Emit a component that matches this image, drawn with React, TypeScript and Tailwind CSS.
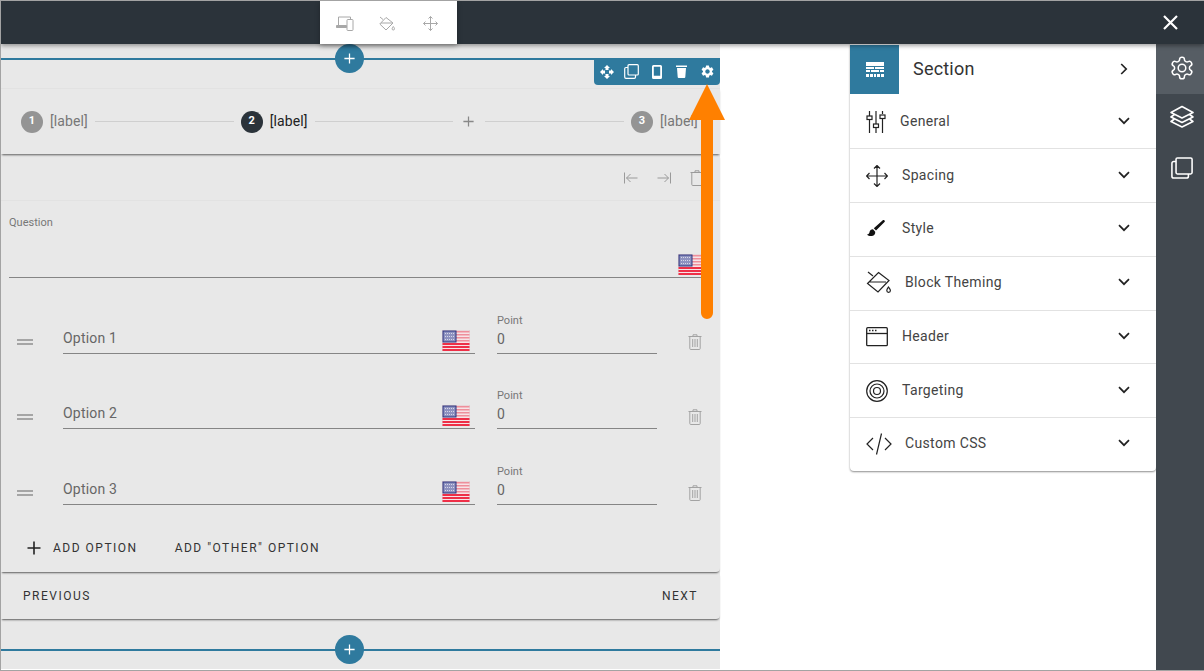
import React from "react";
import { MdSettings } from "react-icons/md";

const Flag = ({ className = "" }: { className?: string }) => (
  <svg width="28" height="21" viewBox="0 0 28 21" className={className}>
    <rect width="28" height="21" fill="#d9c9cc" />
    <rect x="0.5" y="0.5" width="27" height="20" fill="#f7e3e6" />
    {[1, 4, 7, 10].map((y) => (
      <rect key={y} x="14" y={y} width="13.5" height="1.5" fill="#ee8f9b" />
    ))}
    {[13, 16, 19].map((y) => (
      <rect key={y} x="0.5" y={y} width="27" height="2" fill="#ee2f47" />
    ))}
    <rect x="0.5" y="0.5" width="14" height="12" fill="#28327f" />
    <rect x="1.5" y="1.5" width="12" height="10" fill="#8e92c0" />
    {[2, 4, 6, 8, 10].map((x) =>
      [3, 6, 9].map((y) => <rect key={`${x}-${y}`} x={x + 1} y={y} width="1" height="1" fill="#d6d7e8" />)
    )}
  </svg>
);

const Plus = ({ size = 14, cls = "" }: { size?: number; cls?: string }) => (
  <svg width={size} height={size} viewBox="0 0 14 14" className={cls}>
    <path d="M7 0.5v13M0.5 7h13" stroke="currentColor" strokeWidth="1.6" fill="none" />
  </svg>
);

const Trash = () => (
  <svg width="14" height="16" viewBox="0 0 14 16" fill="none" stroke="#a3a3a3" strokeWidth="1">
    <path d="M0.5 2.5h13M5 2.5V0.8h4v1.7M1.8 2.5v12a1 1 0 0 0 1 1h8.4a1 1 0 0 0 1-1v-12M4.7 5v8M7 5v8M9.3 5v8" />
  </svg>
);

const Chevron = () => (
  <svg width="12" height="8" viewBox="0 0 12 8" fill="none" stroke="#222" strokeWidth="1.7">
    <path d="M1 1.2l5 5 5-5" />
  </svg>
);

const Round = ({ children, cls }: { children: React.ReactNode; cls: string }) => (
  <div className={`w-[22px] h-[22px] shrink-0 rounded-full flex items-center justify-center text-white text-[11px] font-bold ${cls}`}>
    {children}
  </div>
);

const StepLine = () => <div className="flex-1 h-px bg-[#cfcfcf] mx-[7px]" />;

const StepLabel = ({ text, cls }: { text: string; cls: string }) => (
  <span className={`ml-[7px] w-[38px] shrink-0 text-[14px] tracking-[0.1px] whitespace-nowrap ${cls}`}>{text}</span>
);

const OptionRow = ({ label, h }: { label: string; h: string }) => (
  <div className={`flex items-end pl-[16px] ${h}`}>
    <div className="w-[16px] h-[6px] mb-[9px] border-y-2 border-[#a5a5a5]" />
    <div className="ml-[30px] w-[412px] h-[30px] border-b border-[#858585] flex items-center justify-between">
      <span className="text-[14px] text-[#666] tracking-[0.2px]">{label}</span>
      <Flag className="self-end mb-[2px] mr-[5px]" />
    </div>
    <div className="ml-[22px] w-[160px] border-b border-[#858585]">
      <div className="text-[11px] leading-[12px] text-[#777]">Point</div>
      <div className="text-[14px] h-[26px] leading-[25px] text-[#666]">0</div>
    </div>
    <div className="ml-[31px] mb-[4px]">
      <Trash />
    </div>
  </div>
);

const stroke = { fill: "none", stroke: "#222", strokeWidth: 1.2 };

const SideIcons: Record<string, React.ReactNode> = {
  General: (
    <svg width="20" height="24" viewBox="0 0 20 24" {...stroke}>
      <path d="M3.5 1v5M3.5 10v13M10 1v13M10 18v5M16.500 1v3M16.500 9v14" />
      <rect x="1" y="6" width="5" height="3.500" />
      <rect x="7.500" y="14" width="5" height="3.500" />
      <rect x="14" y="5" width="5" height="3.500" />
    </svg>
  ),
  Spacing: (
    <svg width="22" height="22" viewBox="0 0 22 22" {...stroke}>
      <path d="M11 0.500v21M0.500 11h21M8 3.500l3-3 3 3M8 18.500l3 3 3-3M3.500 8l-3 3 3 3M18.500 8l3 3-3 3" />
    </svg>
  ),
  Style: (
    <svg width="20" height="20" viewBox="0 0 20 20" fill="#111">
      <path d="M18.500 1.500c.6.600.4 1.200 0 1.600L10 11.500 7.800 9.300 16.800 1.300c.5-.4 1.200-.3 1.700.2z" />
      <path d="M7 10.200c-2 0-3.200 1.200-3.500 3-.2 1.300-1 2-2.500 2.300 1.200 1.400 3 1.800 5 1.500 2.400-.4 3.500-2 3.200-4.300z" />
    </svg>
  ),
  "Block Theming": (
    <svg width="26" height="24" viewBox="0 0 26 24" {...stroke}>
      <path d="M2 1l5 4M12.500 1.500L23 9.500 12 21 1.500 12.500zM3 11h17" />
      <path d="M22.500 16c-1 1.500-1.700 2.500-1.700 3.500a1.800 1.800 0 0 0 3.600 0c0-1-.9-2-1.900-3.500z" />
    </svg>
  ),
  Header: (
    <svg width="22" height="20" viewBox="0 0 22 20" fill="none" stroke="#222" strokeWidth="1.300">
      <rect x="0.700" y="0.700" width="20.600" height="18" rx="1" />
      <path d="M0.700 6.500h20.600" />
      <path d="M3 3.600h1.500M6 3.600h1.500M9 3.600h1.500" strokeWidth="1.500" />
    </svg>
  ),
  Targeting: (
    <svg width="22" height="22" viewBox="0 0 22 22" {...stroke}>
      <circle cx="11" cy="11" r="10.300" />
      <circle cx="11" cy="11" r="7" />
      <circle cx="11" cy="11" r="3.500" />
    </svg>
  ),
  "Custom CSS": (
    <svg width="26" height="22" viewBox="0 0 26 22" {...stroke}>
      <path d="M7 5l-6 6 6 6M19 5l6 6-6 6M15.500 0.500l-5 21" />
    </svg>
  ),
};

const rows = [
  { name: "General", w: "w-[34px]", h: "h-[54px]" },
  { name: "Spacing", w: "w-[36px]", h: "h-[54px]" },
  { name: "Style", w: "w-[36px]", h: "h-[54px] pb-[2px]" },
  { name: "Block Theming", w: "w-[39px]", h: "h-[54px] pb-[2px]" },
  { name: "Header", w: "w-[36px]", h: "h-[53px] pb-[1px]" },
  { name: "Targeting", w: "w-[36px]", h: "h-[54px]" },
  { name: "Custom CSS", w: "w-[39px]", h: "h-[53px] pb-[2px]" },
];

const cardShadow = "shadow-[0_2px_2px_-1px_rgba(0,0,0,0.6)]";

export default function App() {
  return (
    <div className="relative w-[1204px] h-[671px] overflow-hidden flex flex-col bg-white border-t border-l border-b border-[#a3a3a3] font-['Roboto',sans-serif]">
      {/* top bar */}
      <div className="relative z-20 h-[43px] shrink-0 bg-[#2b333a] flex items-stretch shadow-[0_2px_4px_rgba(0,0,0,0.35)]">
        <div className="ml-[319px] w-[137px] bg-white flex items-center pt-[2px] shadow-[0_2px_5px_rgba(0,0,0,0.3)] text-[#a8a8a8]">
          <svg width="18" height="15" viewBox="0 0 18 15" fill="none" stroke="currentColor" strokeWidth="1" className="ml-[16px]">
            <path d="M2.500 9V1h12v2M0.500 11h10" strokeWidth="1" />
            <rect x="11" y="3.500" width="6" height="11" rx="0.800" />
            <path d="M0.500 9.500h10v2h-10z" fill="currentColor" />
          </svg>
          <svg width="16" height="15" viewBox="0 0 16 15" fill="none" stroke="currentColor" strokeWidth="1" className="ml-[25px]">
            <path d="M1 1l3 2.500M7 1.500L14 7 7 14 0.800 8zM2 7h11" />
            <path d="M14.300 10.500c-.7 1-1.200 1.700-1.200 2.300a1.200 1.200 0 0 0 2.400 0c0-.6-.5-1.300-1.200-2.300z" />
          </svg>
          <svg width="15" height="15" viewBox="0 0 15 15" fill="none" stroke="currentColor" strokeWidth="1" className="ml-[28px]">
            <path d="M7.500 0.500v14M0.500 7.500h14M5.500 2.500l2-2 2 2M5.500 12.500l2 2 2-2M2.500 5.500l-2 2 2 2M12.500 5.500l2 2-2 2" />
          </svg>
        </div>
        <div className="ml-auto mr-[26px] flex items-center text-white">
          <svg width="15" height="15" viewBox="0 0 15 15" fill="none" stroke="currentColor" strokeWidth="2.200">
            <path d="M1 1l13 13M14 1L1 14" />
          </svg>
        </div>
      </div>

      <div className="flex-1 flex items-stretch min-h-0">
        {/* canvas */}
        <div className="relative w-[719px] shrink-0 h-[625px] bg-[#e8e8e8] pt-[44px]">
          <div className="absolute left-0 right-0 top-[14px] h-[2px] bg-[#2f7a9e]" />
          <div className="absolute left-[334px] top-0 w-[29px] h-[29px] rounded-full bg-[#2f7a9e] text-white flex items-center justify-center">
            <Plus size={11} />
          </div>
          <div className="absolute right-0 top-[14px] w-[126px] h-[27px] bg-[#2f7a9e] rounded-b-[4px] text-white flex items-center pl-[6px] gap-[11px] z-10">
            <svg width="14" height="14" viewBox="0 0 14 14" fill="white">
              <path d="M7 0l3 3H8.500v2h-3V3H4zM7 14l-3-3h1.500V9h3v2H10zM0 7l3-3v1.500h2v3H3V10zM14 7l-3 3V8.500H9v-3h2V4z" />
            </svg>
            <svg width="15" height="15" viewBox="0 0 15 15" fill="none" stroke="white" strokeWidth="1.200" className="-ml-[1px]">
              <rect x="4" y="0.700" width="10.300" height="10.300" rx="1" />
              <path d="M4 3.500H2a1.300 1.300 0 0 0-1.300 1.300v8.200c0 .8.500 1.300 1.300 1.300h8.200c.8 0 1.300-.5 1.300-1.300V11" />
            </svg>
            <svg width="10" height="14" viewBox="0 0 10 14" className="ml-[2px]">
              <path fillRule="evenodd" fill="white" d="M1.500 0h7A1.500 1.500 0 0 1 10 1.500v11A1.500 1.500 0 0 1 8.500 14h-7A1.500 1.500 0 0 1 0 12.500v-11A1.500 1.500 0 0 1 1.500 0zM1.800 1.800v9h6.400v-9z" />
            </svg>
            <svg width="11" height="13" viewBox="0 0 11 13" fill="white" className="ml-[3px]">
              <path d="M0 0.500h11v1.500H0zM1 3h9l-0.700 9a1 1 0 0 1-1 1H2.700a1 1 0 0 1-1-1z" />
            </svg>
            <MdSettings size={15} className="ml-[2px]" />
          </div>

          {/* stepper */}
          <div className={`h-[66px] border-t border-[#e2e2e2] ${cardShadow} flex items-center pl-[20px] pr-[22px]`}>
            <Round cls="bg-[#949494]">1</Round>
            <StepLabel text="[label]" cls="text-[#777]" />
            <StepLine />
            <Round cls="bg-[#2b333a]">2</Round>
            <StepLabel text="[label]" cls="text-[#222]" />
            <StepLine />
            <Plus size={11} cls="text-[#888] ml-[3px] mr-[4px] shrink-0" />
            <StepLine />
            <Round cls="bg-[#949494]">3</Round>
            <StepLabel text="[label]" cls="text-[#777]" />
          </div>

          {/* question card */}
          <div className={`mt-[1px] rounded-br-[4px] ${cardShadow}`}>
            <div className="h-[46px] border-b border-[#e2e2e2] flex items-center justify-end pr-[16px] gap-[19px] text-[#9a9a9a]">
              <svg width="14" height="12" viewBox="0 0 14 12" fill="none" stroke="currentColor" strokeWidth="1">
                <path d="M0.500 0.500v11M13.500 6H2.500M6.500 2l-4 4 4 4" />
              </svg>
              <svg width="14" height="12" viewBox="0 0 14 12" fill="none" stroke="currentColor" strokeWidth="1">
                <path d="M13.500 0.500v11M0.500 6h11M7.500 2l4 4-4 4" />
              </svg>
              <svg width="14" height="16" viewBox="0 0 14 16" fill="none" stroke="currentColor" strokeWidth="1">
                <path d="M0.500 2.500h13M5 2.500V0.800h4v1.700M1.800 2.500v12a1 1 0 0 0 1 1h8.400a1 1 0 0 0 1-1v-12" />
              </svg>
            </div>
            <div className="h-[77px] ml-[8px] mr-[14px] border-b border-[#858585] flex flex-col">
              <div className="pt-[16px] text-[11px] leading-[12px] text-[#777]">Question</div>
              <Flag className="mt-auto mb-[2px] self-end" />
            </div>
            <OptionRow label="Option 1" h="h-[76px]" />
            <OptionRow label="Option 2" h="h-[75px]" />
            <OptionRow label="Option 3" h="h-[76px]" />
            <div className="h-[67px] pt-[31px] pl-[26px] flex items-start">
              <div className="h-[24px] flex items-center text-[#333] text-[12px] tracking-[1.5px]">
                <Plus size={14} cls="text-[#222]" />
                <span className="ml-[12px]">ADD OPTION</span>
                <span className="ml-[37px]">ADD "OTHER" OPTION</span>
              </div>
            </div>
          </div>

          {/* nav */}
          <div className={`mt-[1px] h-[46px] rounded-br-[4px] ${cardShadow} flex items-center justify-between pl-[22px] pr-[22px] text-[#333] text-[12px] tracking-[1.5px]`}>
            <span>PREVIOUS</span>
            <span>NEXT</span>
          </div>

          <div className="absolute left-0 right-0 top-[605px] h-[2px] bg-[#2f7a9e]" />
          <div className="absolute left-[334px] top-[591px] w-[29px] h-[29px] rounded-full bg-[#2f7a9e] text-white flex items-center justify-center">
            <Plus size={11} />
          </div>
        </div>

        {/* properties */}
        <div className="flex-1 pl-[130px]">
          <div className="w-[306px] rounded-b-[4px] shadow-[0_1px_2px_rgba(0,0,0,0.45)]">
            <div className="h-[51px] flex items-start">
              <div className="w-[49px] h-[49px] mt-[1px] bg-[#2f7a9e] flex items-center justify-center">
                <svg width="18" height="16" viewBox="0 0 18 16" fill="white">
                  <rect x="0" y="0" width="18" height="4" />
                  <rect x="0" y="5" width="8" height="2" />
                  <rect x="9" y="5" width="9" height="2" />
                  <rect x="0" y="8" width="4" height="2" />
                  <rect x="5" y="8" width="8" height="2" />
                  <rect x="14" y="8" width="4" height="2" />
                  <rect x="0" y="12" width="3" height="3" />
                  <rect x="4" y="12" width="3" height="3" />
                  <rect x="8" y="12" width="2" height="3" />
                  <rect x="11" y="12" width="3" height="3" />
                  <rect x="15" y="12" width="3" height="3" />
                </svg>
              </div>
              <span className="ml-[14px] mt-[12px] leading-[26px] text-[18px] text-[#333] tracking-[0.2px]">Section</span>
              <svg width="8" height="12" viewBox="0 0 8 12" fill="none" stroke="#222" strokeWidth="1.700" className="ml-auto mr-[28px] mt-[19px]">
                <path d="M1.200 1l5 5-5 5" />
              </svg>
            </div>
            {rows.map((r, i) => (
              <div
                key={r.name}
                className={`${r.h} pl-[16px] pr-[26px] flex items-center ${i < rows.length - 1 ? "border-b border-[#e2e2e2]" : ""}`}
              >
                <div className={`${r.w} flex items-center`}>{SideIcons[r.name]}</div>
                <span className="text-[14px] text-[#444] tracking-[0.35px]">{r.name}</span>
                <div className="ml-auto flex items-center mb-[2px]">
                  <Chevron />
                </div>
              </div>
            ))}
          </div>
        </div>

        {/* rail */}
        <div className="w-[48px] shrink-0 bg-[#41484f] text-white flex flex-col items-center">
          <div className="w-full h-[50px] bg-[#565d64] flex items-center justify-center pl-[4px] pb-[3px]">
            <svg width="26" height="26" viewBox="0 0 24 24" fill="none" stroke="white" strokeWidth="1.400" strokeLinecap="round" strokeLinejoin="round">
              <path d="M12.220 2h-.44a2 2 0 0 0-2 2v.18a2 2 0 0 1-1 1.730l-.43.250a2 2 0 0 1-2 0l-.15-.080a2 2 0 0 0-2.730.730l-.22.380a2 2 0 0 0 .730 2.730l.15.100a2 2 0 0 1 1 1.720v.510a2 2 0 0 1-1 1.740l-.15.090a2 2 0 0 0-.730 2.730l.22.380a2 2 0 0 0 2.730.730l.15-.080a2 2 0 0 1 2 0l.43.250a2 2 0 0 1 1 1.730V20a2 2 0 0 0 2 2h.44a2 2 0 0 0 2-2v-.18a2 2 0 0 1 1-1.730l.43-.250a2 2 0 0 1 2 0l.15.080a2 2 0 0 0 2.730-.730l.22-.390a2 2 0 0 0-.730-2.730l-.15-.080a2 2 0 0 1-1-1.740v-.500a2 2 0 0 1 1-1.740l.15-.090a2 2 0 0 0 .730-2.730l-.22-.380a2 2 0 0 0-2.730-.730l-.15.080a2 2 0 0 1-2 0l-.43-.250a2 2 0 0 1-1-1.730V4a2 2 0 0 0-2-2z" />
              <circle cx="12" cy="12" r="3.500" />
            </svg>
          </div>
          <div className="mt-[11px] pl-[4px]">
            <svg width="24" height="24" viewBox="0 0 24 24" fill="none" stroke="white" strokeWidth="1.600" strokeLinejoin="round">
              <path d="M12 1.500L23 7.500 12 13 1 7.500z" />
              <path d="M4.500 9.500L1 12l11 5.500L23 12l-3.500-2.500" />
              <path d="M4.500 14L1 16.500 12 22l11-5.500-3.500-2.500" />
            </svg>
          </div>
          <div className="mt-[28px] pl-[4px]">
            <svg width="22" height="22" viewBox="0 0 24 24" fill="none" stroke="white" strokeWidth="1.700">
              <rect x="5.500" y="1" width="17.500" height="17.500" rx="1.500" />
              <path d="M5.500 5H3a2 2 0 0 0-2 2v14a2 2 0 0 0 2 2h14a2 2 0 0 0 2-2v-2.500" />
            </svg>
          </div>
        </div>
      </div>

      {/* annotation arrow */}
      <svg width="38" height="237" viewBox="0 0 38 237" className="absolute left-[687px] top-[83px] z-30">
        <path d="M19 0L37 36H25V229a6 6 0 0 1-12 0V36H1z" fill="#ff8000" />
      </svg>
    </div>
  );
}
